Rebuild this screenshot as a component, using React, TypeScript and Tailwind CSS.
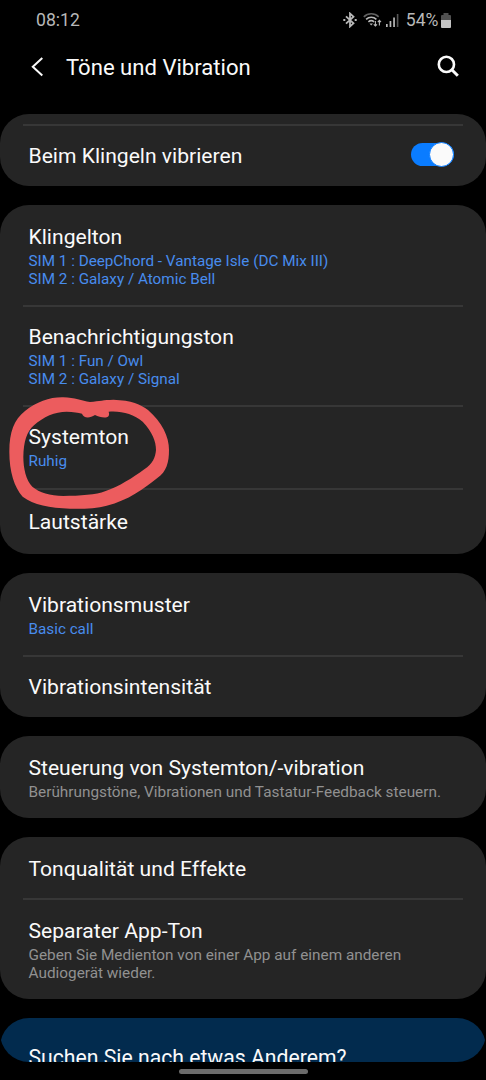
import { ReactNode, useState } from 'react';

interface RowProps {
  title: string;
  className: string;
  sub?: string[];
  muted?: boolean;
  children?: ReactNode;
}

const Row = ({ title, className, sub = [], muted = false, children }: RowProps) => (
  <div className={`flex items-center justify-between pl-[5.5px] pr-[9px] ${className}`}>
    <div>
      <div className="text-[21.1px] leading-6 text-[#fafafa] whitespace-nowrap">{title}</div>
      {sub.map((line) => (
        <div
          key={line}
          className={`leading-[18px] whitespace-nowrap [&:nth-child(2)]:mt-[3px] ${
            muted ? 'text-[15.35px] text-[#919191]' : 'text-[15.25px] text-[#488ced]'
          }`}
        >
          {line}
        </div>
      ))}
    </div>
    {children}
  </div>
);

const Card = ({ children }: { children: ReactNode }) => (
  <section className="shrink-0 rounded-[29px] bg-[#252525] px-[23px] divide-y-2 divide-[#373737]">
    {children}
  </section>
);

const StatusBar = () => (
  <div className="flex h-10 items-center justify-between pl-[36px] pr-[35.5px] text-[#b8b8b8]">
    <span className="text-[17.6px] leading-5">08:12</span>
    <div className="flex items-center">
      <svg className="w-[14px] h-[16px] mr-[6px]" viewBox="0 0 14 16" fill="none" stroke="currentColor" strokeWidth="1.8">
        <path d="M3 4.3l7.5 7L7 14.5v-13l3.5 3.2L3 11.7" />
        <path d="M.3 8h2M11.7 8h2" strokeWidth="1.8" />
      </svg>
      <svg className="w-[19px] h-[16px] mr-[4px]" viewBox="0 0 19 16" fill="none" stroke="currentColor" strokeWidth="1.6">
        <path d="M.8 4.8C5 .8 11.5.8 15.7 4.8" stroke="#626262" />
        <path d="M3.1 7.3c3-2.8 7.3-2.8 10.3 0M5.4 9.8c1.7-1.5 4-1.5 5.7 0" />
        <path d="M6.5 11.5h3.5L8.2 13.5z" fill="currentColor" stroke="none" />
        <path d="M12.4 9v5M10.8 12.3l1.6 1.7 1.6-1.7M16.4 13.5v-5M14.8 10.1l1.6-1.7 1.6 1.7" strokeWidth="1.1" />
      </svg>
      <svg className="w-[13px] h-[14px] mr-[7px]" viewBox="0 0 13 14" fill="currentColor">
        <path d="M0 11h1.7v3H0zM3.6 8h1.7v6H3.6zM7.2 4.5h1.7V14H7.2z" />
        <path d="M10.8 1h1.6v13h-1.6z" fill="#565656" />
      </svg>
      <span className="text-[17.6px] leading-5">54%</span>
      <svg className="w-[10px] h-[15px] ml-[2px]" viewBox="0 0 10 15">
        <path d="M2.5 0h5v2H9q1 0 1 1v5H0V3q0-1 1-1h1.5z" fill="#515151" />
        <path d="M0 7h10v7q0 1-1 1H1q-1 0-1-1z" fill="#c4c4c4" />
      </svg>
    </div>
  </div>
);

export default function App() {
  const [vibrate, setVibrate] = useState(true);

  return (
    <div className="relative flex h-[1080px] w-[486px] flex-col overflow-hidden bg-black font-[Roboto,sans-serif]">
      <StatusBar />

      <header className="flex h-[74px] items-start pl-[31px] pr-[27px] pt-[15px]">
        <svg className="mt-[2px] w-3 h-5 shrink-0" viewBox="0 0 12 20" fill="none" stroke="#fafafa" strokeWidth="2">
          <path d="M11.3 1L1.8 9.8l9.5 8.7" />
        </svg>
        <h1 className="ml-[23px] grow text-[22.1px] leading-6 text-[#fafafa]">Töne und Vibration</h1>
        <svg className="w-[22px] h-[22px]" viewBox="0 0 22 22" fill="none" stroke="#fafafa" strokeWidth="2.6">
          <circle cx="9.4" cy="9.4" r="7.6" />
          <path d="M14.8 14.8l6 6" strokeWidth="3" />
        </svg>
      </header>

      {/* the scroll area rounds whatever card is cut off at its edges */}
      <main className="flex h-[948px] shrink-0 flex-col gap-[19px] overflow-hidden rounded-[29px]">
        <section className="shrink-0 rounded-b-[29px] bg-[#252525] px-[23px] pt-[10px]">
          <Row title="Beim Klingeln vibrieren" className="h-[62px] border-t-2 border-[#373737]">
            <button
              role="switch"
              aria-checked={vibrate}
              aria-label="Beim Klingeln vibrieren"
              onClick={() => setVibrate(!vibrate)}
              className={`mb-[3px] flex h-[23px] w-[43px] items-center rounded-full ${
                vibrate ? 'justify-end bg-[#0a7cff]' : 'justify-start bg-[#5c5c5c]'
              }`}
            >
              <span className="size-[25px] shrink-0 rounded-full border border-[#0a7cff] bg-[#fafafa]" />
            </button>
          </Row>
        </section>

        <Card>
          <Row
            title="Klingelton"
            className="h-[102px] pt-[2px]"
            sub={['SIM 1 : DeepChord - Vantage Isle (DC Mix III)', 'SIM 2 : Galaxy / Atomic Bell']}
          />
          <Row title="Benachrichtigungston" className="h-[100px]" sub={['SIM 1 : Fun / Owl', 'SIM 2 : Galaxy / Signal']} />
          <Row title="Systemton" className="h-[83px]" sub={['Ruhig']} />
          <Row title="Lautstärke" className="h-[64px]" />
        </Card>

        <Card>
          <Row title="Vibrationsmuster" className="h-[84px] pt-[2px]" sub={['Basic call']} />
          <Row title="Vibrationsintensität" className="h-[60px]" />
        </Card>

        <Card>
          <Row
            title="Steuerung von Systemton/-vibration"
            className="h-[82px] pt-[2px]"
            sub={['Berührungstöne, Vibrationen und Tastatur-Feedback steuern.']}
            muted
          />
        </Card>

        <Card>
          <Row title="Tonqualität und Effekte" className="h-[63px] pt-[3px]" />
          <Row
            title="Separater App-Ton"
            className="h-[99px] pt-px"
            sub={['Geben Sie Medienton von einer App auf einem anderen', 'Audiogerät wieder.']}
            muted
          />
        </Card>

        <section className="h-[120px] shrink-0 rounded-t-[29px] bg-[#022b4e] pl-[28.5px] pt-7">
          <div className="text-[21.2px] leading-6 text-[#fafafa]">Suchen Sie nach etwas Anderem?</div>
        </section>
      </main>

      <div className="mt-[7px] h-[5px] w-[129px] shrink-0 self-center rounded-full bg-[#6b6b6b]" />

      {/* hand-drawn marker around "Systemton" */}
      <svg className="pointer-events-none absolute left-0 top-[385px] h-[180px] w-[190px]" viewBox="0 0 570 540">
        <path
          fill="#ec5c5e"
          fillRule="evenodd"
          d="M190 37C225 38 245 48 270 51C300 48 310 45 340 44C395 46 422 58 444 75C486 112 507 155 507 195C507 232 500 260 472 279C432 311 385 346 320 362C290 370 250 372 210 371C150 368 100 360 68 335C43 307 28 260 28 200C28 140 42 105 75 78C110 50 150 36 190 37ZM70 215C71 170 80 140 102 121C130 95 165 80 200 80C220 80 235 83 246 86C250 99 268 101 285 90C298 96 318 102 326 93Q329 88 326 80C365 77 400 87 428 110C457 141 468 168 468 195C466 218 458 236 433 253C398 278 358 305 315 319C290 329 240 333 190 333C150 331 118 323 97 305C78 285 70 250 70 215Z"
        />
      </svg>
    </div>
  );
}
